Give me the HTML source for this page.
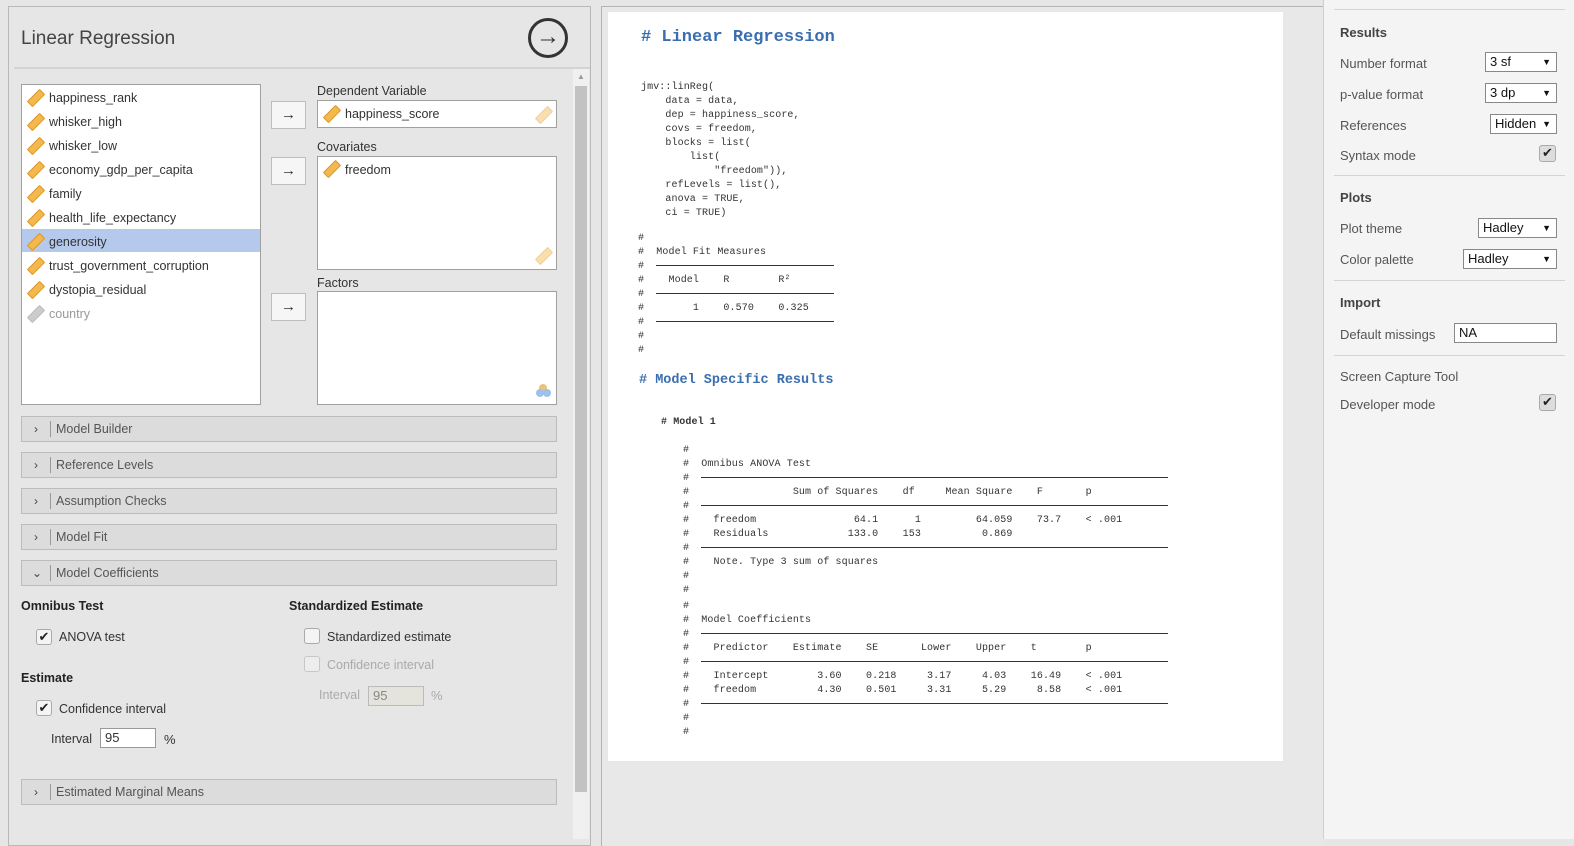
<!DOCTYPE html>
<html><head><meta charset="utf-8"><style>
*{box-sizing:border-box;margin:0;padding:0}
body{width:1574px;height:839px;overflow:hidden;background:#e6e6e6;font-family:"Liberation Sans",sans-serif;font-size:13px;color:#333;position:relative}
.a{position:absolute}
.ruler{position:absolute;width:8px;height:18px;background:#f3b94e;border:1px solid #d9962a;transform:rotate(45deg);border-radius:1px}
.ruler.l{opacity:.45}
.ruler.g{background:#ccc;border-color:#bbb}
.box{position:absolute;background:#fff;border:1px solid #a0a0a0}
.btn{position:absolute;width:35px;height:28px;background:#f6f6f6;border:1px solid #bdbdbd;text-align:center;line-height:25px;font-size:15px;color:#333}
.bar{position:absolute;left:21px;width:536px;height:26px;background:#dcdcdc;border:1px solid #bcbcbc;line-height:24px;color:#555;font-size:12.5px}
.bar span.c{position:absolute;left:12px;top:0;font-size:12px;color:#444}
.bar span.s{position:absolute;left:28px;top:4px;height:16px;border-left:1px solid #999}
.bar span.t{position:absolute;left:34px}
.cb{position:absolute;width:16px;height:16px;border:1px solid #aaa;border-radius:3px;background:#f4f4f4;font-size:13px;line-height:14px;text-align:center;color:#222}
pre{position:absolute;font-family:"Liberation Mono",monospace;font-size:10px;line-height:14px;color:#333;letter-spacing:0.1px}
.ln{display:inline-block;border-top:1px solid #333;vertical-align:middle;height:0}
.rp{position:absolute;font-size:13px;color:#555}
.sel{position:absolute;height:20px;background:#fff;border:1px solid #888;font-size:13px;color:#111;padding-left:4px;line-height:18px}
.sel.d:after{content:"▼";position:absolute;right:5px;font-size:9px}
.hr{position:absolute;left:1334px;width:231px;border-top:1px solid #d4d4d4}
</style></head><body>
<div class="a" style="left:8px;top:6px;width:583px;height:840px;border:1px solid #b9b9b9;background:#e6e6e6"></div>
<div class="a" style="left:21px;top:28px;font-size:19px;color:#444">Linear Regression</div>
<div class="a" style="left:528px;top:18px;width:40px;height:40px;border:3px solid #333;border-radius:50%;text-align:center;line-height:32px;font-size:24px;color:#333;font-weight:bold">→</div>
<div class="a" style="left:14px;top:67px;width:576px;height:2px;background:#d3d3d3"></div>
<div class="a" style="left:573px;top:69px;width:16px;height:770px;background:#f0f0f0"></div>
<div class="a" style="left:575px;top:86px;width:12px;height:706px;background:#c2c2c2"></div>
<div class="a" style="left:577px;top:72px;font-size:8px;color:#999">▲</div>

<div class="box" style="left:21px;top:84px;width:240px;height:321px"></div>
<div class="a" style="left:22px;top:229px;width:238px;height:23px;background:#b4c9ec"></div>
<div class="a" style="left:49px;top:86px;line-height:24px;font-size:12.5px;color:#333">happiness_rank<br>whisker_high<br>whisker_low<br>economy_gdp_per_capita<br>family<br>health_life_expectancy<br>generosity<br>trust_government_corruption<br>dystopia_residual<br><span style="color:#999">country</span></div>
<div class="ruler" style="left:32px;top:89px"></div>
<div class="ruler" style="left:32px;top:113px"></div>
<div class="ruler" style="left:32px;top:137px"></div>
<div class="ruler" style="left:32px;top:161px"></div>
<div class="ruler" style="left:32px;top:185px"></div>
<div class="ruler" style="left:32px;top:209px"></div>
<div class="ruler" style="left:32px;top:233px"></div>
<div class="ruler" style="left:32px;top:257px"></div>
<div class="ruler" style="left:32px;top:281px"></div>
<div class="ruler g" style="left:32px;top:305px"></div>

<div class="btn" style="left:271px;top:101px">→</div>
<div class="btn" style="left:271px;top:157px">→</div>
<div class="btn" style="left:271px;top:293px">→</div>
<div class="a" style="left:317px;top:84px;font-size:12.5px">Dependent Variable</div>
<div class="box" style="left:317px;top:100px;width:240px;height:28px"></div>
<div class="ruler" style="left:328px;top:105px"></div>
<div class="a" style="left:345px;top:107px;font-size:12.5px">happiness_score</div>
<div class="ruler l" style="left:540px;top:106px"></div>
<div class="a" style="left:317px;top:140px;font-size:12.5px">Covariates</div>
<div class="box" style="left:317px;top:156px;width:240px;height:114px"></div>
<div class="ruler" style="left:328px;top:160px"></div>
<div class="a" style="left:345px;top:163px;font-size:12.5px">freedom</div>
<div class="ruler l" style="left:540px;top:247px"></div>
<div class="a" style="left:317px;top:276px;font-size:12.5px">Factors</div>
<div class="box" style="left:317px;top:291px;width:240px;height:114px"></div>
<div class="a" style="left:536px;top:389px;width:8px;height:8px;border-radius:50%;background:#9fc0e8;box-shadow:7px 0 0 #9fc0e8,3px -5px 0 #e8c37a"></div>

<div class="bar" style="top:416px"><span class="c">›</span><span class="s"></span><span class="t">Model Builder</span></div>
<div class="bar" style="top:452px"><span class="c">›</span><span class="s"></span><span class="t">Reference Levels</span></div>
<div class="bar" style="top:488px"><span class="c">›</span><span class="s"></span><span class="t">Assumption Checks</span></div>
<div class="bar" style="top:524px"><span class="c">›</span><span class="s"></span><span class="t">Model Fit</span></div>
<div class="bar" style="top:560px"><span class="c" style="left:10px">⌄</span><span class="s"></span><span class="t">Model Coefficients</span></div>
<div class="bar" style="top:779px"><span class="c">›</span><span class="s"></span><span class="t">Estimated Marginal Means</span></div>

<div class="a" style="left:21px;top:599px;font-weight:bold;color:#222;font-size:12.5px">Omnibus Test</div>
<div class="cb" style="left:36px;top:629px">✔</div>
<div class="a" style="left:59px;top:630px;font-size:12.5px">ANOVA test</div>
<div class="a" style="left:21px;top:671px;font-weight:bold;color:#222;font-size:12.5px">Estimate</div>
<div class="cb" style="left:36px;top:700px">✔</div>
<div class="a" style="left:59px;top:702px;font-size:12.5px">Confidence interval</div>
<div class="a" style="left:51px;top:732px;font-size:12.5px">Interval</div>
<div class="a" style="left:100px;top:728px;width:56px;height:20px;background:#fff;border:1px solid #999;padding-left:4px;line-height:18px">95</div>
<div class="a" style="left:164px;top:732px">%</div>
<div class="a" style="left:289px;top:599px;font-weight:bold;color:#222;font-size:12.5px">Standardized Estimate</div>
<div class="cb" style="left:304px;top:628px"></div>
<div class="a" style="left:327px;top:630px;font-size:12.5px">Standardized estimate</div>
<div class="cb" style="left:304px;top:656px;opacity:.5"></div>
<div class="a" style="left:327px;top:658px;color:#aaa;font-size:12.5px">Confidence interval</div>
<div class="a" style="left:319px;top:688px;color:#aaa;font-size:12.5px">Interval</div>
<div class="a" style="left:368px;top:686px;width:56px;height:20px;background:#e4e4dc;border:1px solid #bbb;padding-left:4px;line-height:18px;color:#888">95</div>
<div class="a" style="left:431px;top:688px;color:#aaa">%</div>

<div class="a" style="left:601px;top:6px;width:722px;height:840px;border-left:1px solid #b4b4b4;border-top:1px solid #b4b4b4;background:#e8e8e8"></div>
<div class="a" style="left:608px;top:12px;width:675px;height:749px;background:#fff"></div>
<div class="a" style="left:641px;top:28px;font-family:'Liberation Mono',monospace;font-weight:bold;font-size:17px;color:#3a6eb0">#&nbsp;Linear&nbsp;Regression</div>
<pre style="left:641px;top:81px">jmv::linReg(
    data = data,
    dep = happiness_score,
    covs = freedom,
    blocks = list(
        list(
            "freedom")),
    refLevels = list(),
    anova = TRUE,
    ci = TRUE)</pre>
<pre style="left:638px;top:232px">#
#  Model Fit Measures
#  <span class="ln" style="width:178px"></span>
#    Model    R        R²
#  <span class="ln" style="width:178px"></span>
#        1    0.570    0.325
#  <span class="ln" style="width:178px"></span>
#
#</pre>
<div class="a" style="left:639px;top:373px;font-family:'Liberation Mono',monospace;font-weight:bold;font-size:13.5px;color:#3a6eb0">#&nbsp;Model&nbsp;Specific&nbsp;Results</div>
<pre style="left:661px;top:416px;font-weight:bold">#&nbsp;Model 1</pre>
<pre style="left:683px;top:444px">#
#  Omnibus ANOVA Test
#  <span class="ln" style="width:467px"></span>
#                 Sum of Squares    df     Mean Square    F       p
#  <span class="ln" style="width:467px"></span>
#    freedom                64.1      1         64.059    73.7    &lt; .001
#    Residuals             133.0    153          0.869
#  <span class="ln" style="width:467px"></span>
#    Note. Type 3 sum of squares
#
#</pre>
<pre style="left:683px;top:600px">#
#  Model Coefficients
#  <span class="ln" style="width:467px"></span>
#    Predictor    Estimate    SE       Lower    Upper    t        p
#  <span class="ln" style="width:467px"></span>
#    Intercept        3.60    0.218     3.17     4.03    16.49    &lt; .001
#    freedom          4.30    0.501     3.31     5.29     8.58    &lt; .001
#  <span class="ln" style="width:467px"></span>
#
#</pre>

<div class="a" style="left:1323px;top:0;width:251px;height:839px;background:#f4f4f4;border-left:1px solid #cfcfcf"></div>
<div class="hr" style="top:9px"></div>
<div class="a" style="left:1340px;top:25px;font-weight:bold;color:#444;font-size:13px">Results</div>
<div class="rp" style="left:1340px;top:56px">Number format</div>
<div class="sel d" style="left:1485px;top:52px;width:72px">3 sf</div>
<div class="rp" style="left:1340px;top:87px">p-value format</div>
<div class="sel d" style="left:1485px;top:83px;width:72px">3 dp</div>
<div class="rp" style="left:1340px;top:118px">References</div>
<div class="sel d" style="left:1490px;top:114px;width:67px">Hidden</div>
<div class="rp" style="left:1340px;top:148px">Syntax mode</div>
<div class="cb" style="left:1539px;top:145px;width:17px;height:17px;background:#ddd">✔</div>
<div class="hr" style="top:175px"></div>
<div class="a" style="left:1340px;top:190px;font-weight:bold;color:#444">Plots</div>
<div class="rp" style="left:1340px;top:221px">Plot theme</div>
<div class="sel d" style="left:1478px;top:218px;width:79px">Hadley</div>
<div class="rp" style="left:1340px;top:252px">Color palette</div>
<div class="sel d" style="left:1463px;top:249px;width:94px">Hadley</div>
<div class="hr" style="top:280px"></div>
<div class="a" style="left:1340px;top:295px;font-weight:bold;color:#444">Import</div>
<div class="rp" style="left:1340px;top:327px">Default missings</div>
<div class="sel" style="left:1454px;top:323px;width:103px">NA</div>
<div class="hr" style="top:355px"></div>
<div class="rp" style="left:1340px;top:369px">Screen Capture Tool</div>
<div class="rp" style="left:1340px;top:397px">Developer mode</div>
<div class="cb" style="left:1539px;top:394px;width:17px;height:17px;background:#ddd">✔</div>
</body></html>
